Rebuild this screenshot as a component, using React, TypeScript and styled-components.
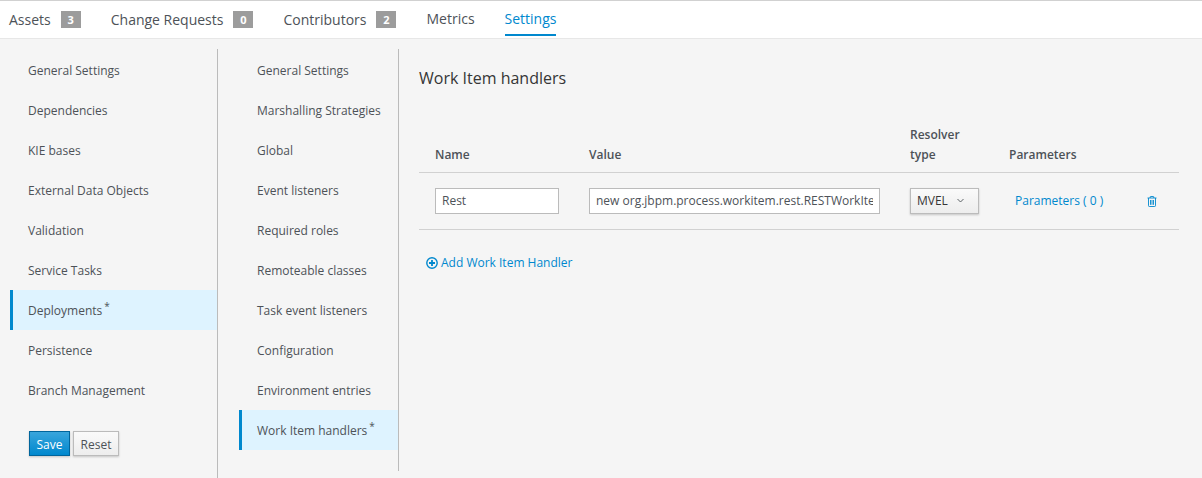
import styled, { createGlobalStyle } from "styled-components";

const tabs = [
    { label: "Assets", count: 3 },
    { label: "Change Requests", count: 0 },
    { label: "Contributors", count: 2 },
    { label: "Metrics" },
    { label: "Settings", active: true },
];

const mainItems = [
    "General Settings",
    "Dependencies",
    "KIE bases",
    "External Data Objects",
    "Validation",
    "Service Tasks",
    "Deployments",
    "Persistence",
    "Branch Management",
];

const deploymentItems = [
    "General Settings",
    "Marshalling Strategies",
    "Global",
    "Event listeners",
    "Required roles",
    "Remoteable classes",
    "Task event listeners",
    "Configuration",
    "Environment entries",
    "Work Item handlers",
];

const App = () => {
    return (
        <Page>
            <GlobalStyle />
            <TabBar>
                {tabs.map((tab) => (
                    <Tab key={tab.label} $active={tab.active} $counted={tab.count !== undefined}>
                        {tab.label}
                        {tab.count !== undefined && <Badge>{tab.count}</Badge>}
                    </Tab>
                ))}
            </TabBar>
            <Body>
                <MainNav>
                    {mainItems.map((item) => (
                        <NavItem key={item} $active={item === "Deployments"}>
                            {item}
                            {item === "Deployments" && <Dirty>*</Dirty>}
                        </NavItem>
                    ))}
                    <Actions>
                        <SaveButton>Save</SaveButton>
                        <ResetButton>Reset</ResetButton>
                    </Actions>
                </MainNav>
                <SubNav>
                    {deploymentItems.map((item) => (
                        <NavItem key={item} $active={item === "Work Item handlers"}>
                            {item}
                            {item === "Work Item handlers" && <Dirty>*</Dirty>}
                        </NavItem>
                    ))}
                </SubNav>
                <Content>
                    <Title>Work Item handlers</Title>
                    <HeaderRow>
                        <HeaderCell>Name</HeaderCell>
                        <HeaderCell>Value</HeaderCell>
                        <HeaderCell>
                            Resolver
                            <br />
                            type
                        </HeaderCell>
                        <HeaderCell>Parameters</HeaderCell>
                    </HeaderRow>
                    <DataRow>
                        <NameInput defaultValue="Rest" />
                        <ValueInput defaultValue="new org.jbpm.process.workitem.rest.RESTWorkItemHandler(ksession)" />
                        <ResolverButton>
                            MVEL
                            <svg width="7" height="5" viewBox="0 0 7 5" fill="none" stroke="#4d5258" strokeWidth="0.9">
                                <path d="M0.5 1 L3.5 4 L6.5 1" />
                            </svg>
                        </ResolverButton>
                        <ParamsLink>Parameters ( 0 )</ParamsLink>
                        <TrashIcon viewBox="0 0 10 11" width="10" height="11" fill="none" stroke="#0088ce" strokeWidth="0.9">
                            <path d="M0.5 2 H9.5 M3.2 2 V0.9 Q3.2 0.5 3.6 0.5 H6.4 Q6.8 0.5 6.8 0.9 V2 M1.5 2 V9.7 Q1.5 10.5 2.3 10.5 H7.7 Q8.5 10.5 8.5 9.7 V2 M3.5 4 V8.8 M5 4 V8.8 M6.5 4 V8.8" />
                        </TrashIcon>
                    </DataRow>
                    <AddLink>
                        <svg width="12" height="12" viewBox="0 0 12 12" fill="none" stroke="#0088ce">
                            <circle cx="6" cy="6" r="5.2" strokeWidth="1.4" />
                            <path d="M3 6 H9 M6 3 V9" strokeWidth="1.8" />
                        </svg>
                        Add Work Item Handler
                    </AddLink>
                </Content>
            </Body>
        </Page>
    );
};

const GlobalStyle = createGlobalStyle`
    html, body {
        margin: 0;
        padding: 0;
        background: #f5f5f5;
    }
    * {
        box-sizing: border-box;
    }
`;

const Page = styled.div`
    width: 1202px;
    height: 478px;
    overflow: hidden;
    background: #f5f5f5;
    color: #363636;
    font-family: "Open Sans", sans-serif;
    font-size: 12px;
`;

const TabBar = styled.div`
    height: 39px;
    display: flex;
    padding-left: 9px;
    background: #fff;
    border-top: 1px solid #d1d1d1;
    border-bottom: 1px solid #e7e7e7;
`;

const Tab = styled.div<{ $active?: boolean; $counted?: boolean }>`
    height: 35px;
    margin-right: 30px;
    padding-top: ${(p) => (p.$counted ? "9px" : "8px")};
    display: flex;
    align-items: flex-start;
    font-size: 14px;
    line-height: 19px;
    color: ${(p) => (p.$active ? "#0088ce" : "#4d5258")};
    border-bottom: ${(p) => (p.$active ? "2px solid #0088ce" : "none")};
`;

const Badge = styled.span`
    width: 20px;
    height: 17px;
    margin-left: 10px;
    margin-top: 1px;
    background: #9c9c9c;
    color: #fff;
    font-size: 11px;
    font-weight: 700;
    line-height: 17px;
    text-align: center;
`;

const Body = styled.div`
    display: flex;
    padding-top: 10px;
`;

const MainNav = styled.div`
    width: 208px;
    height: 429px;
    margin-left: 10px;
    padding-top: 1px;
    border-right: 1px solid #bbb;
`;

const SubNav = styled.div`
    width: 160px;
    height: 422px;
    margin-left: 21px;
    padding-top: 1px;
    border-right: 1px solid #bbb;
`;

const NavItem = styled.div<{ $active?: boolean }>`
    height: 40px;
    display: flex;
    align-items: center;
    padding: 1px 0 0 ${(p) => (p.$active ? "15px" : "18px")};
    color: #4d5258;
    background: ${(p) => (p.$active ? "#def3ff" : "transparent")};
    border-left: ${(p) => (p.$active ? "3px solid #0088ce" : "none")};
`;

const Dirty = styled.sup`
    margin: -10px 0 0 2px;
    font-size: 10px;
    line-height: 12px;
    align-self: center;
`;

const Actions = styled.div`
    display: flex;
    gap: 3px;
    margin: 21px 0 0 19px;
`;

const BaseButton = styled.button`
    height: 25px;
    padding: 2px 0 0;
    font-family: inherit;
    font-size: 12px;
    line-height: 1;
    box-shadow: 0 1px 2px rgba(3, 3, 3, 0.2);
`;

const SaveButton = styled(BaseButton)`
    width: 41px;
    color: #fff;
    border: 1px solid #00659c;
    background: linear-gradient(#39a5dc, #0088ce);
`;

const ResetButton = styled(BaseButton)`
    width: 46px;
    color: #4d5258;
    border: 1px solid #bbb;
    background: linear-gradient(#fafafa, #ededed);
`;

const Content = styled.div`
    flex: 0 0 760px;
    margin-left: 20px;
`;

const Title = styled.h2`
    margin: 0;
    padding-top: 18px;
    font-size: 16px;
    font-weight: 400;
    line-height: 22px;
    color: #363636;
`;

const tableColumns = `
    display: grid;
    padding-left: 16px;
    border-bottom: 1px solid #d1d1d1;
`;

const HeaderRow = styled.div`
    ${tableColumns}
    grid-template-columns: 154px 321px 99px 1fr;
    height: 62px;
    margin-top: 22px;
    padding-bottom: 7px;
    align-items: end;
`;

const HeaderCell = styled.div`
    font-weight: 600;
    line-height: 20px;
    color: #4d5258;
`;

const DataRow = styled.div`
    ${tableColumns}
    grid-template-columns: 154px 321px 105px 132px 1fr;
    height: 57px;
    align-items: center;
`;

const TextInput = styled.input`
    height: 26px;
    padding: 0 6px 1px;
    font-family: inherit;
    font-size: 12px;
    color: #4d5258;
    background: #fff;
    border: 1px solid #bbb;
    border-radius: 0;
    outline: none;
`;

const NameInput = styled(TextInput)`
    width: 124px;
`;

const ValueInput = styled(TextInput)`
    width: 291px;
`;

const ResolverButton = styled.div`
    width: 69px;
    height: 26px;
    display: flex;
    align-items: center;
    gap: 9px;
    padding: 0 0 1px 6px;
    color: #363636;
    border: 1px solid #bbb;
    background: linear-gradient(#fafafa, #ededed);
    box-shadow: 0 1px 2px rgba(3, 3, 3, 0.2);
`;

const ParamsLink = styled.span`
    margin-bottom: 2px;
    color: #0088ce;
    white-space: nowrap;
`;

const TrashIcon = styled.svg`
    display: block;
`;

const AddLink = styled.div`
    display: flex;
    align-items: center;
    gap: 3px;
    margin: 24px 0 0 7px;
    line-height: 18px;
    color: #0088ce;
`;

export default App;
